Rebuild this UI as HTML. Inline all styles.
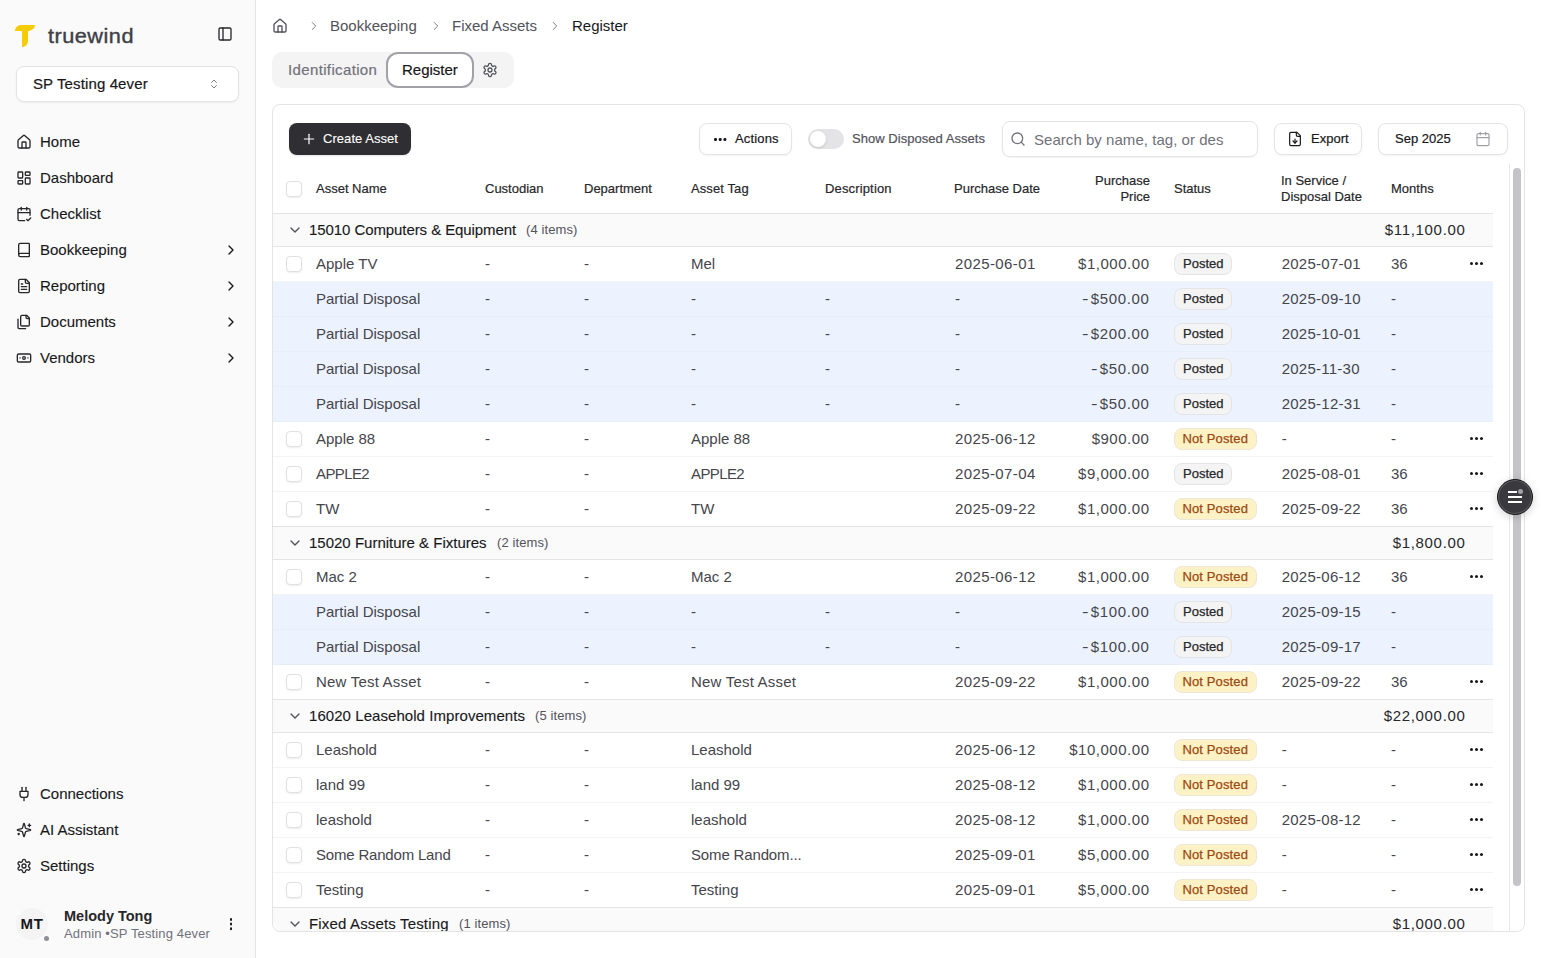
<!DOCTYPE html>
<html lang="en">
<head>
<meta charset="utf-8">
<title>Fixed Assets Register</title>
<style>
*{box-sizing:border-box;margin:0;padding:0}
html,body{width:1541px;height:958px;overflow:hidden;background:#fff}
body{position:relative;font-family:"Liberation Sans",sans-serif;color:#18181b;font-size:15px;-webkit-font-smoothing:antialiased}
.abs{position:absolute}
svg{display:block}
.ic{position:absolute;fill:none;stroke:currentColor;stroke-width:2;stroke-linecap:round;stroke-linejoin:round}

/* ---------- sidebar ---------- */
#sb{position:absolute;left:0;top:0;width:256px;height:958px;background:#fafafa;border-right:1px solid #e4e4e7}
#brand{position:absolute;left:48px;top:21.5px;font-size:20.5px;line-height:28px;color:#3f3f46;letter-spacing:.45px;-webkit-text-stroke:.4px #3f3f46;transform:scaleX(1.06);transform-origin:0 0;white-space:nowrap}
#org{position:absolute;left:16px;top:66px;width:223px;height:36px;background:#fff;border:1px solid #e4e4e7;border-radius:8px;box-shadow:0 1px 2px rgba(0,0,0,.05)}
#org span{position:absolute;left:16px;top:0;line-height:34px;font-size:15px;color:#18181b;letter-spacing:.12px;-webkit-text-stroke:.2px #18181b}
.nav{position:absolute;left:0;width:255px;height:36px}
.nav .ic{left:16px;top:10px;width:16px;height:16px;color:#27272a}
.nav span{position:absolute;left:40px;top:0;line-height:36px;font-size:15px;color:#18181b;letter-spacing:0;-webkit-text-stroke:.12px #18181b}
.nav .chev{left:223px;top:10px;width:16px;height:16px;color:#18181b}

/* ---------- main ---------- */
.crumb{position:absolute;top:16px;line-height:20px;font-size:15px;color:#52525b;letter-spacing:0;white-space:nowrap}
#tabs{position:absolute;left:272px;top:52px;width:242px;height:36px;background:#f4f4f5;border-radius:10px}
#card{position:absolute;left:272px;top:104px;width:1253px;height:828px;border:1px solid #e4e4e7;border-radius:8px;overflow:hidden;background:#fff}
.btn{position:absolute;height:32px;border:1px solid #e4e4e7;border-radius:8px;background:#fff;box-shadow:0 1px 2px rgba(0,0,0,.05);font-size:13px;color:#18181b}
.btn span{position:absolute;top:0;line-height:30px;white-space:nowrap;letter-spacing:0;-webkit-text-stroke:.2px #18181b}

/* ---------- table ---------- */
#tbl{position:absolute;left:0;top:59px;width:1220px}
.th{position:relative;height:50px;border-bottom:1px solid #e4e4e7;font-size:13px;color:#27272a}
.th span{position:absolute;line-height:16px;white-space:nowrap;letter-spacing:0;-webkit-text-stroke:.2px #27272a}
.g{position:relative;height:34px;margin-top:-1px;background:#fafafa;border-top:1px solid #e4e4e7;border-bottom:1px solid #e4e4e7}
.g b{position:absolute;left:36px;top:0;line-height:32px;font-weight:normal;font-size:15px;color:#18181b;white-space:nowrap;letter-spacing:-.08px;-webkit-text-stroke:.12px #18181b}
.g i{position:absolute;top:0;line-height:32px;font-style:normal;font-size:13px;color:#52525b;white-space:nowrap;letter-spacing:.1px}
.g u{position:absolute;right:27.5px;top:0;line-height:32px;text-decoration:none;font-size:15px;color:#27272a;white-space:nowrap;letter-spacing:.67px}
.g .ic{left:14px;top:8px;width:16px;height:16px;color:#52525b;stroke-width:2}
.r{position:relative;height:35px;border-bottom:1px solid #f4f4f5;font-size:15px;color:#45454c}
.r.d{background:#ecf3fe;border-bottom-color:#e6eefa}
.r span{position:absolute;top:0;line-height:34px;white-space:nowrap;letter-spacing:0}
.r .c1{left:43px}.r .c2{left:212px}.r .c3{left:311px}.r .c4{left:418px}.r .c5{left:552px}.r .c6{left:682px}
.r .c6{letter-spacing:.4px}.r .c7{right:343.5px;letter-spacing:.52px}.r .c9{left:1008.7px;letter-spacing:.25px}.r .c10{left:1118px}.r .c7 s{display:inline-block;text-decoration:none;transform:scaleX(1.3);transform-origin:0 50%;margin-right:3px}.r.d .c7{letter-spacing:.63px}
.cb{position:absolute;left:13px;top:9px;width:16px;height:16px;border:1px solid #e1e1e5;border-radius:4px;background:#fff;box-shadow:0 1px 2px rgba(0,0,0,.07)}
.bd{position:absolute;left:901px;top:6px;height:22px;border-radius:8px;font-size:13px;line-height:20px;padding:0 8px;white-space:nowrap;font-style:normal}
.bd.p{background:#f4f4f5;border:1px solid #e4e4e7;color:#27272a;-webkit-text-stroke:.25px #27272a}
.bd.n{background:#fdf2c6;border:1px solid #ece7d6;color:#9d480e;padding:0 7.5px;letter-spacing:.12px;-webkit-text-stroke:.25px #9d480e}
.dots{position:absolute;left:1197px;top:15px;width:14px;height:4px}
.dots:before{content:"";position:absolute;left:0;top:0;width:3px;height:3px;border-radius:50%;background:#18181b;box-shadow:5px 0 0 #18181b,10px 0 0 #18181b}
</style>
</head>
<body>

<!-- ================= SIDEBAR ================= -->
<div id="sb">
  <svg class="abs" style="left:14px;top:24px" width="22" height="24" viewBox="0 0 22 24"><path d="M1 7 C1.2 3.6 3.6 1 7 1 H21 C20.6 4.2 18.6 6.6 14 7 V16.5 C13.8 20.4 11.6 22.8 8 23.2 V7 Z" fill="#f4cd07"/></svg>
  <div id="brand">truewind</div>
  <svg class="ic" style="left:217px;top:26px;width:16px;height:16px;color:#27272a" viewBox="0 0 24 24"><rect width="18" height="18" x="3" y="3" rx="2"/><path d="M9 3v18"/></svg>
  <div id="org"><span>SP Testing 4ever</span><svg class="ic" style="left:191px;top:11px;width:12px;height:12px;color:#71717a;stroke-width:1.8" viewBox="0 0 24 24"><path d="m7 15 5 5 5-5"/><path d="m7 9 5-5 5 5"/></svg></div>
  <div class="nav" style="top:124px"><svg class="ic" viewBox="0 0 24 24"><path d="M15 21v-8a1 1 0 0 0-1-1h-4a1 1 0 0 0-1 1v8"/><path d="M3 10a2 2 0 0 1 .709-1.528l7-5.999a2 2 0 0 1 2.582 0l7 5.999A2 2 0 0 1 21 10v9a2 2 0 0 1-2 2H5a2 2 0 0 1-2-2z"/></svg><span>Home</span></div>
  <div class="nav" style="top:160px"><svg class="ic" viewBox="0 0 24 24"><rect width="7" height="9" x="3" y="3" rx="1"/><rect width="7" height="5" x="14" y="3" rx="1"/><rect width="7" height="9" x="14" y="12" rx="1"/><rect width="7" height="5" x="3" y="16" rx="1"/></svg><span>Dashboard</span></div>
  <div class="nav" style="top:196px"><svg class="ic" viewBox="0 0 24 24"><path d="M8 2v4"/><path d="M16 2v4"/><path d="M21 14V6a2 2 0 0 0-2-2H5a2 2 0 0 0-2 2v14a2 2 0 0 0 2 2h8"/><path d="M3 10h18"/><path d="m16 20 2 2 4-4"/></svg><span>Checklist</span></div>
  <div class="nav" style="top:232px"><svg class="ic" viewBox="0 0 24 24"><path d="M4 19.5v-15A2.5 2.5 0 0 1 6.5 2H19a1 1 0 0 1 1 1v18a1 1 0 0 1-1 1H6.5a1 1 0 0 1 0-5H20"/></svg><span>Bookkeeping</span><svg class="ic chev" viewBox="0 0 24 24"><path d="m9 18 6-6-6-6"/></svg></div>
  <div class="nav" style="top:268px"><svg class="ic" viewBox="0 0 24 24"><path d="M15 2H6a2 2 0 0 0-2 2v16a2 2 0 0 0 2 2h12a2 2 0 0 0 2-2V7Z"/><path d="M14 2v4a2 2 0 0 0 2 2h4"/><path d="M10 9H8"/><path d="M16 13H8"/><path d="M16 17H8"/></svg><span>Reporting</span><svg class="ic chev" viewBox="0 0 24 24"><path d="m9 18 6-6-6-6"/></svg></div>
  <div class="nav" style="top:304px"><svg class="ic" viewBox="0 0 24 24"><path d="M20 7h-3a2 2 0 0 1-2-2V2"/><path d="M9 18a2 2 0 0 1-2-2V4a2 2 0 0 1 2-2h7l4 4v10a2 2 0 0 1-2 2Z"/><path d="M3 7.6v12.8A1.6 1.6 0 0 0 4.6 22h9.8"/></svg><span>Documents</span><svg class="ic chev" viewBox="0 0 24 24"><path d="m9 18 6-6-6-6"/></svg></div>
  <div class="nav" style="top:340px"><svg class="ic" viewBox="0 0 24 24"><rect width="20" height="12" x="2" y="6" rx="2"/><circle cx="12" cy="12" r="2"/><path d="M6 12h.01M18 12h.01"/></svg><span>Vendors</span><svg class="ic chev" viewBox="0 0 24 24"><path d="m9 18 6-6-6-6"/></svg></div>
  <div class="nav" style="top:776px"><svg class="ic" viewBox="0 0 24 24"><path d="M12 22v-5"/><path d="M9 8V2"/><path d="M15 8V2"/><path d="M18 8v5a4 4 0 0 1-4 4h-4a4 4 0 0 1-4-4V8Z"/></svg><span>Connections</span></div>
  <div class="nav" style="top:812px"><svg class="ic" viewBox="0 0 24 24"><path d="M9.937 15.5A2 2 0 0 0 8.5 14.063l-6.135-1.582a.5.5 0 0 1 0-.962L8.5 9.936A2 2 0 0 0 9.937 8.5l1.582-6.135a.5.5 0 0 1 .963 0L14.063 8.5A2 2 0 0 0 15.5 9.937l6.135 1.581a.5.5 0 0 1 0 .964L15.5 14.063a2 2 0 0 0-1.437 1.437l-1.582 6.135a.5.5 0 0 1-.963 0z"/><path d="M20 3v4"/><path d="M22 5h-4"/><path d="M4 17v2"/><path d="M5 18H3"/></svg><span>AI Assistant</span></div>
  <div class="nav" style="top:848px"><svg class="ic" viewBox="0 0 24 24"><path d="M12.22 2h-.44a2 2 0 0 0-2 2v.18a2 2 0 0 1-1 1.73l-.43.25a2 2 0 0 1-2 0l-.15-.08a2 2 0 0 0-2.73.73l-.22.38a2 2 0 0 0 .73 2.73l.15.1a2 2 0 0 1 1 1.72v.51a2 2 0 0 1-1 1.74l-.15.09a2 2 0 0 0-.73 2.73l.22.38a2 2 0 0 0 2.73.73l.15-.08a2 2 0 0 1 2 0l.43.25a2 2 0 0 1 1 1.73V20a2 2 0 0 0 2 2h.44a2 2 0 0 0 2-2v-.18a2 2 0 0 1 1-1.73l.43-.25a2 2 0 0 1 2 0l.15.08a2 2 0 0 0 2.73-.73l.22-.39a2 2 0 0 0-.73-2.73l-.15-.08a2 2 0 0 1-1-1.74v-.5a2 2 0 0 1 1-1.74l.15-.09a2 2 0 0 0 .73-2.73l-.22-.38a2 2 0 0 0-2.73-.73l-.15.08a2 2 0 0 1-2 0l-.43-.25a2 2 0 0 1-1-1.73V4a2 2 0 0 0-2-2z"/><circle cx="12" cy="12" r="3"/></svg><span>Settings</span></div>
  <div class="abs" style="left:16px;top:908px;width:32px;height:32px;border-radius:50%;background:#f4f4f5"></div>
  <div class="abs" style="left:16px;top:908px;width:32px;line-height:32px;text-align:center;font-weight:bold;font-size:15px;color:#18181b;letter-spacing:.6px">MT</div>
  <div class="abs" style="left:43.5px;top:935.5px;width:5px;height:5px;border-radius:50%;background:#8e8e98;box-shadow:0 0 0 1.5px #fafafa"></div>
  <div class="abs" id="uname" style="left:64px;top:906px;line-height:20px;font-weight:bold;font-size:14.5px;color:#27272a;letter-spacing:0;white-space:nowrap">Melody Tong</div>
  <div class="abs" id="usub" style="left:64px;top:925px;line-height:18px;font-size:13px;color:#71717a;letter-spacing:.14px;white-space:nowrap">Admin &#8226;SP Testing 4ever</div>
  <div class="abs" style="left:229.6px;top:918.2px;width:2.8px;height:2.8px;border-radius:50%;background:#18181b;box-shadow:0 4.6px 0 #18181b,0 9.2px 0 #18181b"></div>
</div>

<!-- ================= MAIN ================= -->
<svg class="ic" style="left:272px;top:18px;width:16px;height:16px;color:#52525b;stroke-width:2" viewBox="0 0 24 24"><path d="M15 21v-8a1 1 0 0 0-1-1h-4a1 1 0 0 0-1 1v8"/><path d="M3 10a2 2 0 0 1 .709-1.528l7-5.999a2 2 0 0 1 2.582 0l7 5.999A2 2 0 0 1 21 10v9a2 2 0 0 1-2 2H5a2 2 0 0 1-2-2z"/></svg>
<svg class="ic" style="left:307px;top:19px;width:14px;height:14px;color:#71717a;stroke-width:1.6" viewBox="0 0 24 24"><path d="m9 18 6-6-6-6"/></svg>
<div class="crumb" id="c1" style="left:330px">Bookkeeping</div>
<svg class="ic" style="left:429px;top:19px;width:14px;height:14px;color:#71717a;stroke-width:1.6" viewBox="0 0 24 24"><path d="m9 18 6-6-6-6"/></svg>
<div class="crumb" id="c2" style="left:452px">Fixed Assets</div>
<svg class="ic" style="left:548px;top:19px;width:14px;height:14px;color:#71717a;stroke-width:1.6" viewBox="0 0 24 24"><path d="m9 18 6-6-6-6"/></svg>
<div class="crumb" id="c3" style="left:572px;color:#18181b">Register</div>

<div id="tabs">
  <div class="abs" id="t1" style="left:16px;top:0;line-height:36px;font-size:15px;color:#71717a;white-space:nowrap;letter-spacing:.36px;-webkit-text-stroke:.2px #71717a">Identification</div>
  <div class="abs" style="left:114px;top:0;width:88px;height:36px;border:2px solid #a1a1aa;border-radius:12px;background:#fff"></div>
  <div class="abs" id="t2" style="left:130px;top:0;line-height:36px;font-size:15px;color:#18181b;white-space:nowrap;-webkit-text-stroke:.2px #18181b">Register</div>
  <svg class="ic" style="left:210px;top:10px;width:16px;height:16px;color:#52525b;stroke-width:1.9" viewBox="0 0 24 24"><path d="M12.22 2h-.44a2 2 0 0 0-2 2v.18a2 2 0 0 1-1 1.73l-.43.25a2 2 0 0 1-2 0l-.15-.08a2 2 0 0 0-2.73.73l-.22.38a2 2 0 0 0 .73 2.73l.15.1a2 2 0 0 1 1 1.72v.51a2 2 0 0 1-1 1.74l-.15.09a2 2 0 0 0-.73 2.73l.22.38a2 2 0 0 0 2.73.73l.15-.08a2 2 0 0 1 2 0l.43.25a2 2 0 0 1 1 1.73V20a2 2 0 0 0 2 2h.44a2 2 0 0 0 2-2v-.18a2 2 0 0 1 1-1.73l.43-.25a2 2 0 0 1 2 0l.15.08a2 2 0 0 0 2.73-.73l.22-.39a2 2 0 0 0-.73-2.73l-.15-.08a2 2 0 0 1-1-1.74v-.5a2 2 0 0 1 1-1.74l.15-.09a2 2 0 0 0 .73-2.73l-.22-.38a2 2 0 0 0-2.73-.73l-.15.08a2 2 0 0 1-2 0l-.43-.25a2 2 0 0 1-1-1.73V4a2 2 0 0 0-2-2z"/><circle cx="12" cy="12" r="3"/></svg>
</div>
<div id="card">
  <div class="abs" style="left:16px;top:18px;width:122px;height:32px;border-radius:8px;background:#2f2f33;box-shadow:0 1px 2px rgba(0,0,0,.1)">
    <svg class="ic" style="left:12px;top:8px;width:16px;height:16px;color:#fff;stroke-width:1.8" viewBox="0 0 24 24"><path d="M5 12h14"/><path d="M12 5v14"/></svg>
    <span class="abs" id="ca" style="left:34px;top:0;line-height:32px;font-size:13px;color:#fff;white-space:nowrap;letter-spacing:.05px;-webkit-text-stroke:.1px #fff">Create Asset</span>
  </div>
  <div class="btn" style="left:426px;top:18px;width:93px">
    <i class="abs" style="left:14px;top:14px;width:2.6px;height:2.6px;border-radius:50%;background:#18181b;box-shadow:4.7px 0 0 #18181b,9.4px 0 0 #18181b"></i>
    <span id="ac" style="left:35px;letter-spacing:.15px">Actions</span>
  </div>
  <div class="abs" style="left:535px;top:24px;width:36px;height:20px;border-radius:10px;background:#e4e4e7"><i class="abs" style="left:2px;top:2px;width:16px;height:16px;border-radius:50%;background:#fff;box-shadow:0 1px 3px rgba(0,0,0,.15)"></i></div>
  <div class="abs" id="sd" style="left:579px;top:18px;line-height:32px;font-size:13px;color:#52525b;white-space:nowrap;letter-spacing:.04px;-webkit-text-stroke:.2px #52525b">Show Disposed Assets</div>
  <div class="abs" style="left:729px;top:16px;width:256px;height:36px;border:1px solid #e4e4e7;border-radius:8px;background:#fff;box-shadow:0 1px 2px rgba(0,0,0,.05);overflow:hidden">
    <svg class="ic" style="left:7px;top:9px;width:16px;height:16px;color:#71717a;stroke-width:2" viewBox="0 0 24 24"><circle cx="11" cy="11" r="8"/><path d="m21 21-4.3-4.3"/></svg>
    <span class="abs" id="ph" style="left:31px;top:0;line-height:35px;font-size:15px;color:#71717a;white-space:nowrap;letter-spacing:.04px">Search by name, tag, or des</span>
  </div>
  <div class="btn" style="left:1001px;top:18px;width:88px">
    <svg class="ic" style="left:12px;top:7px;width:16px;height:16px;color:#18181b;stroke-width:1.8" viewBox="0 0 24 24"><path d="M15 2H6a2 2 0 0 0-2 2v16a2 2 0 0 0 2 2h12a2 2 0 0 0 2-2V7Z"/><path d="M14 2v4a2 2 0 0 0 2 2h4"/><path d="M12 18v-6"/><path d="m9 15 3 3 3-3"/></svg>
    <span id="ex" style="left:36px">Export</span>
  </div>
  <div class="btn" style="left:1105px;top:18px;width:130px">
    <span id="dt" style="left:16px">Sep 2025</span>
    <svg class="ic" style="left:96px;top:7px;width:16px;height:16px;color:#a1a1aa;stroke-width:1.8" viewBox="0 0 24 24"><path d="M8 2v4"/><path d="M16 2v4"/><rect width="18" height="18" x="3" y="4" rx="2"/><path d="M3 10h18"/></svg>
  </div>
  <div class="abs" style="left:1236px;top:59px;width:15px;height:770px;background:#fff;border-left:1px solid #e8e8ea"></div>
  <div class="abs" style="left:1240px;top:63px;width:8px;height:718px;border-radius:4px;background:#c4c4c7"></div>
  <div id="tbl">
    <div class="th">
      <div class="cb" style="top:17px"></div>
      <span id="h1" style="left:43px;top:17px">Asset Name</span>
      <span id="h2" style="left:212px;top:17px">Custodian</span>
      <span id="h3" style="left:311px;top:17px">Department</span>
      <span id="h4" style="left:418px;top:17px;letter-spacing:.1px">Asset Tag</span>
      <span id="h5" style="left:552px;top:17px;letter-spacing:.15px">Description</span>
      <span id="h6" style="left:681px;top:17px">Purchase Date</span>
      <span id="h7" style="right:343px;top:9px;text-align:right">Purchase<br>Price</span>
      <span id="h8" style="left:901px;top:17px">Status</span>
      <span id="h9" style="left:1008px;top:9px">In Service /<br>Disposal Date</span>
      <span id="h10" style="left:1118px;top:17px">Months</span>
    </div>
    <div class="g"><svg class="ic" viewBox="0 0 24 24"><path d="m6 9 6 6 6-6"/></svg><b>15010 Computers &amp; Equipment</b><i style="left:253px">(4 items)</i><u>$11,100.00</u></div>
    <div class="r"><div class="cb"></div><span class="c1">Apple TV</span><span class="c2">-</span><span class="c3">-</span><span class="c4">Mel</span><span class="c5"></span><span class="c6">2025-06-01</span><span class="c7">$1,000.00</span><em class="bd p">Posted</em><span class="c9">2025-07-01</span><span class="c10">36</span><div class="dots"></div></div>
    <div class="r d"><span class="c1">Partial Disposal</span><span class="c2">-</span><span class="c3">-</span><span class="c4">-</span><span class="c5">-</span><span class="c6">-</span><span class="c7"><s>-</s>$500.00</span><em class="bd p">Posted</em><span class="c9">2025-09-10</span><span class="c10">-</span></div>
    <div class="r d"><span class="c1">Partial Disposal</span><span class="c2">-</span><span class="c3">-</span><span class="c4">-</span><span class="c5">-</span><span class="c6">-</span><span class="c7"><s>-</s>$200.00</span><em class="bd p">Posted</em><span class="c9">2025-10-01</span><span class="c10">-</span></div>
    <div class="r d"><span class="c1">Partial Disposal</span><span class="c2">-</span><span class="c3">-</span><span class="c4">-</span><span class="c5">-</span><span class="c6">-</span><span class="c7"><s>-</s>$50.00</span><em class="bd p">Posted</em><span class="c9">2025-11-30</span><span class="c10">-</span></div>
    <div class="r d"><span class="c1">Partial Disposal</span><span class="c2">-</span><span class="c3">-</span><span class="c4">-</span><span class="c5">-</span><span class="c6">-</span><span class="c7"><s>-</s>$50.00</span><em class="bd p">Posted</em><span class="c9">2025-12-31</span><span class="c10">-</span></div>
    <div class="r"><div class="cb"></div><span class="c1">Apple 88</span><span class="c2">-</span><span class="c3">-</span><span class="c4">Apple 88</span><span class="c5"></span><span class="c6">2025-06-12</span><span class="c7">$900.00</span><em class="bd n">Not Posted</em><span class="c9">-</span><span class="c10">-</span><div class="dots"></div></div>
    <div class="r"><div class="cb"></div><span class="c1" style="letter-spacing:-.6px">APPLE2</span><span class="c2">-</span><span class="c3">-</span><span class="c4" style="letter-spacing:-.6px">APPLE2</span><span class="c5"></span><span class="c6">2025-07-04</span><span class="c7">$9,000.00</span><em class="bd p">Posted</em><span class="c9">2025-08-01</span><span class="c10">36</span><div class="dots"></div></div>
    <div class="r"><div class="cb"></div><span class="c1">TW</span><span class="c2">-</span><span class="c3">-</span><span class="c4">TW</span><span class="c5"></span><span class="c6">2025-09-22</span><span class="c7">$1,000.00</span><em class="bd n">Not Posted</em><span class="c9">2025-09-22</span><span class="c10">36</span><div class="dots"></div></div>
    <div class="g"><svg class="ic" viewBox="0 0 24 24"><path d="m6 9 6 6 6-6"/></svg><b style="letter-spacing:0">15020 Furniture &amp; Fixtures</b><i style="left:224px">(2 items)</i><u>$1,800.00</u></div>
    <div class="r"><div class="cb"></div><span class="c1">Mac 2</span><span class="c2">-</span><span class="c3">-</span><span class="c4">Mac 2</span><span class="c5"></span><span class="c6">2025-06-12</span><span class="c7">$1,000.00</span><em class="bd n">Not Posted</em><span class="c9">2025-06-12</span><span class="c10">36</span><div class="dots"></div></div>
    <div class="r d"><span class="c1">Partial Disposal</span><span class="c2">-</span><span class="c3">-</span><span class="c4">-</span><span class="c5">-</span><span class="c6">-</span><span class="c7"><s>-</s>$100.00</span><em class="bd p">Posted</em><span class="c9">2025-09-15</span><span class="c10">-</span></div>
    <div class="r d"><span class="c1">Partial Disposal</span><span class="c2">-</span><span class="c3">-</span><span class="c4">-</span><span class="c5">-</span><span class="c6">-</span><span class="c7"><s>-</s>$100.00</span><em class="bd p">Posted</em><span class="c9">2025-09-17</span><span class="c10">-</span></div>
    <div class="r"><div class="cb"></div><span class="c1" style="letter-spacing:.2px">New Test Asset</span><span class="c2">-</span><span class="c3">-</span><span class="c4" style="letter-spacing:.2px">New Test Asset</span><span class="c5"></span><span class="c6">2025-09-22</span><span class="c7">$1,000.00</span><em class="bd n">Not Posted</em><span class="c9">2025-09-22</span><span class="c10">36</span><div class="dots"></div></div>
    <div class="g"><svg class="ic" viewBox="0 0 24 24"><path d="m6 9 6 6 6-6"/></svg><b style="letter-spacing:.06px">16020 Leasehold Improvements</b><i style="left:262px">(5 items)</i><u>$22,000.00</u></div>
    <div class="r"><div class="cb"></div><span class="c1">Leashold</span><span class="c2">-</span><span class="c3">-</span><span class="c4">Leashold</span><span class="c5"></span><span class="c6">2025-06-12</span><span class="c7">$10,000.00</span><em class="bd n">Not Posted</em><span class="c9">-</span><span class="c10">-</span><div class="dots"></div></div>
    <div class="r"><div class="cb"></div><span class="c1">land 99</span><span class="c2">-</span><span class="c3">-</span><span class="c4">land 99</span><span class="c5"></span><span class="c6">2025-08-12</span><span class="c7">$1,000.00</span><em class="bd n">Not Posted</em><span class="c9">-</span><span class="c10">-</span><div class="dots"></div></div>
    <div class="r"><div class="cb"></div><span class="c1">leashold</span><span class="c2">-</span><span class="c3">-</span><span class="c4">leashold</span><span class="c5"></span><span class="c6">2025-08-12</span><span class="c7">$1,000.00</span><em class="bd n">Not Posted</em><span class="c9">2025-08-12</span><span class="c10">-</span><div class="dots"></div></div>
    <div class="r"><div class="cb"></div><span class="c1" style="letter-spacing:-.19px">Some Random Land</span><span class="c2">-</span><span class="c3">-</span><span class="c4" style="letter-spacing:-.15px">Some Random...</span><span class="c5"></span><span class="c6">2025-09-01</span><span class="c7">$5,000.00</span><em class="bd n">Not Posted</em><span class="c9">-</span><span class="c10">-</span><div class="dots"></div></div>
    <div class="r"><div class="cb"></div><span class="c1">Testing</span><span class="c2">-</span><span class="c3">-</span><span class="c4">Testing</span><span class="c5"></span><span class="c6">2025-09-01</span><span class="c7">$5,000.00</span><em class="bd n">Not Posted</em><span class="c9">-</span><span class="c10">-</span><div class="dots"></div></div>
    <div class="g"><svg class="ic" viewBox="0 0 24 24"><path d="m6 9 6 6 6-6"/></svg><b style="letter-spacing:.16px">Fixed Assets Testing</b><i style="left:186px">(1 items)</i><u>$1,000.00</u></div>
  </div>
</div>
<div class="abs" style="left:1497px;top:479px;width:36px;height:36px;border-radius:50%;background:#39393e;border:1px solid #18181b;box-shadow:0 0 0 1px rgba(255,255,255,.18) inset,0 2px 8px rgba(0,0,0,.18)">
  <i class="abs" style="left:10px;top:11px;width:9px;height:2px;background:#fff"></i>
  <i class="abs" style="left:10px;top:16px;width:14px;height:2px;background:#fff;box-shadow:0 5px 0 #fff"></i>
  <i class="abs" style="left:20px;top:9px;width:5px;height:5px;border-radius:50%;background:#a1a1aa"></i>
</div>

</body>
</html>
